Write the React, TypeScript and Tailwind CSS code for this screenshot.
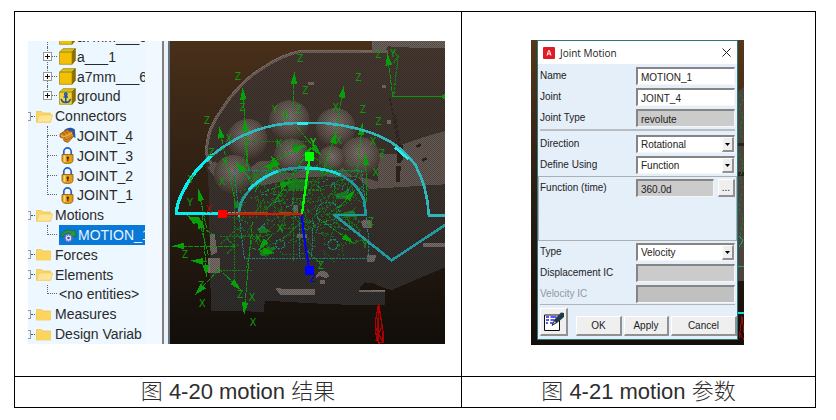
import type { ReactNode } from "react";

type Kind = "cube" | "ground" | "motor" | "lock" | "motion" | "none";

type TreeRow =
  | { type: "folder"; label: string; open?: boolean }
  | { type: "item"; label: string; icon: Kind; expandable?: boolean; last?: boolean; selected?: boolean };

const rows: TreeRow[] = [
  { type: "item", label: "a7mm___5", icon: "cube", expandable: true },
  { type: "item", label: "a___1", icon: "cube", expandable: true },
  { type: "item", label: "a7mm___6", icon: "cube", expandable: true },
  { type: "item", label: "ground", icon: "ground", expandable: true, last: true },
  { type: "folder", label: "Connectors", open: true },
  { type: "item", label: "JOINT_4", icon: "motor" },
  { type: "item", label: "JOINT_3", icon: "lock" },
  { type: "item", label: "JOINT_2", icon: "lock" },
  { type: "item", label: "JOINT_1", icon: "lock", last: true },
  { type: "folder", label: "Motions", open: true },
  { type: "item", label: "MOTION_1", icon: "motion", last: true, selected: true },
  { type: "folder", label: "Forces" },
  { type: "folder", label: "Elements", open: true },
  { type: "item", label: "<no entities>", icon: "none", last: true },
  { type: "folder", label: "Measures" },
  { type: "folder", label: "Design Variab" },
];

function FolderIcon({ open }: { open?: boolean }) {
  return (
    <svg viewBox="0 0 17 13" className="h-[13px] w-[17px] shrink-0">
      <path d="M0.5 12V1.5h5l1.5 1.5h7.5V12z" fill="#fbd667" stroke="#edc04a" strokeWidth="0.7" />
      {open ? (
        <path d="M0.8 12.3L3 5h13.7l-2 7.3z" fill="#fee594" stroke="#f0c95a" strokeWidth="0.7" />
      ) : (
        <path d="M1 4.5h13.5V12H1z" fill="#fdd45c" />
      )}
    </svg>
  );
}

function ItemIcon({ kind }: { kind: Kind }) {
  if (kind === "cube" || kind === "ground") {
    return (
      <svg viewBox="0 0 17 17" className="h-[17px] w-[17px] shrink-0">
        <path d="M0.5 4.2L4 0.7h12.3l-3.3 3.5z" fill="#dcc11a" stroke="#8d7400" strokeWidth="0.7" />
        <path d="M13 4.2L16.3 0.7v11.8L13 16.3z" fill="#8d7100" stroke="#735c00" strokeWidth="0.7" />
        <path d="M0.5 4.2H13v12.1H0.5z" fill={kind === "cube" ? "#f2c004" : "#f3cf3a"} stroke="#a68100" strokeWidth="0.7" />
        {kind === "ground" && (
          <g fill="none" stroke="#1753b0" strokeWidth="1.5">
            <circle cx="6.8" cy="6.3" r="1.2" />
            <path d="M6.8 7.5v7M4.6 9h4.4M2.2 10.8c.4 2.4 2.2 3.6 4.6 3.7 2.4-.1 4.2-1.3 4.6-3.7" />
          </g>
        )}
      </svg>
    );
  }
  if (kind === "lock") {
    return (
      <svg viewBox="0 0 13 17" className="mx-[2px] h-[17px] w-[13px] shrink-0">
        <path d="M2.8 8V4.6a3.7 3.7 0 0 1 7.4 0V8" fill="none" stroke="#2a5fc0" strokeWidth="1.7" />
        <path d="M1 7.5h11v6c0 1.8-1.8 3-5.5 3S1 15.3 1 13.5z" fill="#e59d18" stroke="#8a5a08" strokeWidth="0.8" />
        <path d="M2.5 8.3h2V15h-2z" fill="#ffd469" />
        <circle cx="6.8" cy="10.8" r="1.2" fill="#4a2c00" />
        <path d="M6.2 11h1.2v3.2H6.2z" fill="#4a2c00" />
      </svg>
    );
  }
  if (kind === "motor") {
    return (
      <svg viewBox="0 0 17 17" className="h-[17px] w-[17px] shrink-0">
        <path d="M5 3.500C8 0 13 .2 15.800 2.500L16.500 11l-4-2z" fill="#1d57b4" />
        <path d="M1 7l7-4.500 3 2 2-.5 1.500 5.500L9 15.500l-4-1.500-.5-2.500L1 10z" fill="#d68719" stroke="#8c520a" strokeWidth="0.8" />
        <path d="M2 8.500l3 1.500 8-4M4.500 11.500l2 1 7.500-4" fill="none" stroke="#f7bd58" />
        <path d="M5 10l1.500 3 7-3.800M3 6l3 1.500M6 4.500L9 6" fill="none" stroke="#8c520a" strokeWidth="0.8" />
      </svg>
    );
  }
  return (
    <svg viewBox="0 0 17 15" className="ml-px h-[15px] w-[17px] shrink-0">
      <path d="M.8 8.5C2.5 3 7.5.3 12.5 3.3L14.5 1.500 16.300 9 9.500 7.500l1.500-1.800C8 4 4.500 5 2.800 9z" fill="#2a9a36" stroke="#146b20" strokeWidth="0.6" />
      <circle cx="8.5" cy="10" r="3.4" fill="#e6e6fa" stroke="#7169c8" strokeWidth="1.6" strokeDasharray="2 .7" />
      <circle cx="8.5" cy="10" r="1.3" fill="#4947a5" />
    </svg>
  );
}

function Guide({ expandable, last }: { expandable?: boolean; last?: boolean }) {
  return (
    <span className="relative ml-[19px] flex w-3 shrink-0 flex-col self-stretch">
      <span className="flex flex-1 border-l border-dotted border-[#666]">
        <span className="mr-[2px] flex-1 border-b border-dotted border-[#666]" />
      </span>
      <span className={`flex-1 ${last ? "" : "border-l border-dotted border-[#666]"}`} />
      {expandable && (
        <span className="absolute top-[5px] -left-1 grid h-[9px] w-[9px] place-items-center border border-[#9a9a9a] bg-white">
          <svg viewBox="0 0 7 7" className="h-[7px] w-[7px]" shapeRendering="crispEdges">
            <path d="M1 3h5v1H1zM3 1h1v5H3z" fill="#111" />
          </svg>
        </span>
      )}
    </span>
  );
}

function Tree() {
  return (
    <div className="flex w-[142px] shrink-0 items-end overflow-hidden bg-[#f1f8ff]">
      <ul className="flex h-[317px] w-[117px] flex-col overflow-hidden bg-[#edf7ff] text-[14px] leading-5 text-[#2a2a2a]">
        {rows.map((row) =>
          row.type === "folder" ? (
            <li key={row.label} className="flex min-h-0 flex-1 items-center whitespace-nowrap">
              <span className="h-[9px] w-[3px] shrink-0 border border-l-0 border-[#999]" />
              <span className="w-1 shrink-0 border-t border-dotted border-[#555]" />
              <span className="ml-px flex"><FolderIcon open={row.open} /></span>
              <span className="ml-[2px]">{row.label}</span>
            </li>
          ) : (
            <li key={row.label} className="flex min-h-0 flex-1 items-center whitespace-nowrap">
              <Guide expandable={row.expandable} last={row.last} />
              {row.icon === "none" ? (
                <span>{row.label}</span>
              ) : (
                <span className={`flex flex-1 items-center self-stretch ${row.selected ? "bg-[#0a78d6] text-[#e8f4ff]" : ""}`}>
                  <ItemIcon kind={row.icon} />
                  <span className="ml-px">{row.label}</span>
                </span>
              )}
            </li>
          ),
        )}
      </ul>
      <div className="ml-auto h-full w-2 border-r-2 border-l-2 border-r-[#667078] border-l-[#808080] bg-[#eaf1f8]" />
    </div>
  );
}

const spheres = [
  [247, 312, 60],
  [373, 257, 61],
  [512, 278, 59],
  [585, 366, 60],
  [205, 418, 58],
  [380, 362, 52],
  [500, 372, 40],
];

const axes = [
  [385, 215, 388, 112],
  [250, 405, 233, 158],
  [215, 520, 162, 274],
  [510, 300, 537, 152],
  [575, 430, 592, 264],
  [245, 400, 240, 252],
  [210, 634, 22, 633],
  [125, 680, 78, 677],
  [160, 705, 90, 780],
  [125, 580, 100, 462],
  [262, 560, 237, 838],
  [112, 540, 125, 725],
  [150, 605, 65, 540],
  [160, 700, 228, 765],
  [683, 185, 667, 55],
  [460, 550, 566, 625],
  [395, 275, 468, 362],
  [280, 460, 212, 380],
  [350, 420, 318, 362],
  [270, 470, 330, 370],
  [605, 500, 602, 355],
  [470, 420, 515, 290],
  [330, 500, 440, 335],
  [290, 400, 420, 330],
  [110, 560, 70, 545],
  [130, 660, 100, 545],
  [320, 600, 280, 645],
  [300, 470, 380, 440],
  [520, 520, 570, 465],
  [260, 640, 330, 655],
];

const letters: [string, number, number][] = [
  ["Z", 218, 123], ["Z", 405, 70], ["Z", 125, 255], ["Z", 139, 352], ["Z", 580, 126], ["Z", 593, 222],
  ["Z", 640, 258], ["Z", 650, 354], ["Z", 640, 57], ["Y", 684, 54], ["X", 624, 318], ["X", 632, 412],
  ["Z", 420, 165], ["Y", 330, 222], ["X", 512, 218], ["Z", 59, 657], ["Y", 75, 503], ["Y", 78, 432],
  ["X", 112, 806], ["X", 264, 862], ["X", 261, 786], ["Z", 225, 777], ["Z", 108, 750], ["X", 172, 440],
  ["Z", 232, 218], ["X", 192, 310], ["K", 343, 325], ["Z", 400, 222], ["X", 521, 317], ["Z", 467, 690],
  ["X", 345, 580], ["Y", 600, 628], ["B", 362, 240], ["X", 180, 382], ["X", 280, 610], ["Z", 617, 560],
];

function clutter(count: number, seed: number, x0: number, y0: number, w: number, h: number, len: number) {
  let s = seed;
  const next = () => {
    s = (s * 16807) % 2147483647;
    return s / 2147483647;
  };
  const parts: string[] = [];
  for (let i = 0; i < count; i++) {
    const x = x0 + next() * w;
    const y = y0 + next() * h;
    const dx = (next() - 0.5) * len;
    const dy = (next() - 0.5) * len;
    parts.push(`M${x.toFixed(0)} ${y.toFixed(0)}l${dx.toFixed(0)} ${dy.toFixed(0)}`);
  }
  return parts.join("");
}

const mesh = clutter(95, 4711, 225, 405, 365, 180, 120);
const meshLow = clutter(26, 977, 235, 560, 340, 105, 100);
const flecks = clutter(190, 313, 215, 405, 395, 235, 26);
const cyanFlecks = clutter(36, 99, 250, 400, 310, 190, 40);

const bodyShape =
  "M138 828L130 420Q115 375 122 335Q130 275 165 225Q190 185 215 160Q250 125 290 98Q350 58 405 47L620 50 625 18H840V697L680 765 655 758 625 745 600 742 580 765 660 768V811L500 808 300 797 296 830z";

function Axis({ p }: { p: number[] }) {
  const [x1, y1, x2, y2] = p;
  const d = Math.hypot(x2 - x1, y2 - y1);
  const ux = (x2 - x1) / d;
  const uy = (y2 - y1) / d;
  const bx = x2 - ux * 36;
  const by = y2 - uy * 36;
  return (
    <g>
      <path d={`M${x1} ${y1}L${x2} ${y2}`} stroke="#0c960c" strokeWidth="3" strokeDasharray="15 3" />
      <path d={`M${x2} ${y2}L${bx - uy * 10} ${by + ux * 10}L${bx + uy * 10} ${by - ux * 10}Z`} fill="#08a008" />
    </g>
  );
}

function Viewport() {
  return (
    <svg viewBox="15 18 825 909" preserveAspectRatio="xMidYMid slice" className="h-full min-w-0 flex-1" shapeRendering="crispEdges" role="img">
      <defs>
        <linearGradient id="sky" x1="0" y1="0" x2="0" y2="1">
          <stop offset="0" stopColor="#49301a" />
          <stop offset="0.5" stopColor="#2c1e13" />
          <stop offset="1" stopColor="#110d09" />
        </linearGradient>
        <linearGradient id="shell" x1="0" y1="0" x2="0" y2="1">
          <stop offset="0" stopColor="#493a32" />
          <stop offset="0.55" stopColor="#3b332e" />
          <stop offset="1" stopColor="#2f2e2d" />
        </linearGradient>
        <radialGradient id="ball" cx="0.5" cy="0.4" r="0.6">
          <stop offset="0" stopColor="#857a75" />
          <stop offset="0.55" stopColor="#665b54" />
          <stop offset="1" stopColor="#43362f" />
        </radialGradient>
        <pattern id="dither" width="6" height="6" patternUnits="userSpaceOnUse">
          <path d="M0 0h3v3H0zM3 3h3v3H3z" fill="#17110d" fillOpacity="0.32" />
        </pattern>
      </defs>
      <path d="M0 0H860V940H0z" fill="url(#sky)" />
      <path d={bodyShape} fill="url(#shell)" />
      <path d="M620 18H840V40L740 38 668 34 660 50 620 52z" fill="#71665f" />
      <path d="M148 398Q118 365 126 330Q132 275 168 228Q190 190 218 163Q250 125 292 100Q350 60 408 49H670" fill="none" stroke="#74675f" strokeWidth="9" />
      <path d="M840 288L780 305 712 328 702 357 640 355 638 440 600 428 470 424 380 432 300 450 200 452 148 425 128 398 148 380 220 425 280 380 330 375 380 400 470 400 520 370 560 405 612 462 840 448z" fill="#665b55" />
      {spheres.map(([x, y, r]) => (
        <circle key={`${x}-${y}`} cx={x} cy={y} r={r} fill="url(#ball)" />
      ))}
      <path d="M675 190L704 355M690 240L710 360" stroke="#302722" strokeWidth="5" strokeDasharray="10 4" />
      <path d="M696 330h17v45l-8 10h-9zM694 393h14l-4 47h-10zM752 333l12-9 6 6-12 9zM770 374l12-9 6 6-12 9z" fill="#30241b" />
      <path d="M430 140h16v10h-16zM650 150h14v10h-14zM665 256h12v12h-12zM135 598h14l8 55-20 8zM130 668h35v46h-35zM775 625h65v10h-65zM330 758l35 5h84v17H345zM583 765h77v6h-77zM588 560q16-14 34 0v18h-28zM452 724q20-35 42 0l-14 6q-14-12-28 0zM465 736h15v12h-15zM605 660h30l-8 22h-20zM385 510h14v25h-14zM395 598h30v10h-30z" fill="#7b716c" />
      <path d={bodyShape} fill="url(#dither)" />

      <g fill="none" stroke="#117d14">
        <path d={mesh} strokeWidth="3" strokeDasharray="8 4" opacity="0.8" />
        <path d={meshLow} strokeWidth="3" strokeDasharray="6 5" opacity="0.75" />
        <path d={flecks} strokeWidth="4" strokeDasharray="6 3" opacity="0.8" />
        <path d="M250 320H430M250 320L220 425M165 605H290L330 595M165 705H260M210 400V760M245 700L265 590M430 410H600M385 410V680M225 445L390 330 600 470" strokeWidth="3" strokeDasharray="6 3" />
        <path d="M355 610l50-45M185 610l26 25-26 20M285 650l25-14 20 4-28 24zM350 440h110v25H350zM420 640l50 50M700 60L686 182" strokeWidth="4" strokeDasharray="9 3" />
      </g>
      <path d="M284 650l14-12 30 1-10 16-30 10zM360 442l30-12 45 8-10 24-50 2zM275 582l20-8 25 17-35 4zM535 533l30-8 10 20-30 3zM208 500h22v18h-22zM510 477l38-10-3 25h-30zM380 325l48 10-44 12z" fill="#168619" opacity="0.8" />

      <g fill="none" stroke="#1d7f83" strokeWidth="3" strokeDasharray="7 3">
        <path d={cyanFlecks} />
        <path d="M208 406H590M208 406L222 540 238 670H612L608 560M403 560V670M445 560L440 670M590 406L608 570" />
        <circle cx="345" cy="627" r="14" />
        <circle cx="504" cy="628" r="15" />
        <circle cx="489" cy="535" r="34" />
      </g>
      {axes.map((p) => (
        <Axis key={p.join("-")} p={p} />
      ))}
      <path d="M683 185H832" stroke="#0b980b" strokeWidth="4" />
      <circle cx="838" cy="185" r="7" fill="#0b980b" />
      <path d="M700 65l-14 18M682 42l15 22" stroke="#167516" strokeWidth="4" />

      <g fill="none" strokeLinejoin="round">
        <path d="M165 535H34C35 500 60 450 92 410Q115 382 140 362" stroke="#08eeee" strokeWidth="10" />
        <path d="M140 362Q200 312 270 287T410 264H480Q580 275 645 304T750 388Q786 450 792 542H840" stroke="#2fb7bc" strokeWidth="8" />
        <path d="M395 266H430M690 337L730 372" stroke="#29ecee" strokeWidth="8" />
        <path d="M222 530Q225 490 265 455T350 405Q385 397 435 398T535 424Q580 450 597 495L603 540H508L680 676 840 570" stroke="#22999e" strokeWidth="8" />
        <path d="M250 465Q290 425 340 408M420 400Q480 398 525 419" stroke="#17dce0" strokeWidth="8" />
        <path d="M165 535H222V550" stroke="#16c5c9" strokeWidth="6" strokeDasharray="8 4" />
      </g>
      <path d="M174 536H410" stroke="#ed1000" strokeWidth="6" />
      <path d="M218 533H310M345 533H380" stroke="#756012" strokeWidth="3" />
      <path d="M160 524h26v26h-26z" fill="#f00" />
      <path d="M411 537L420 470 434 364" fill="none" stroke="#0f0" strokeWidth="7" />
      <path d="M421 351h26v26h-26z" fill="#0f0" />
      <path d="M410 540L420 625 433 706" fill="none" stroke="#00f" strokeWidth="6" />
      <path d="M421 692h27v27h-27z" fill="#00f" />
      <path d="M641 806L631 860V890L641 925 654 921V890L641 806V927M630 875l24 46M652 870l-20 48M637 850v70" fill="none" stroke="#ad0000" strokeWidth="4" />

      <g className="font-['DejaVu_Sans_Mono']" fontSize="32" textAnchor="middle" dominantBaseline="central" fill="#0c980c">
        {letters.map(([c, x, y]) => (
          <text key={`${x}-${y}`} x={x} y={y}>{c}</text>
        ))}
        <text x="131" y="524" fill="#a60d08">X</text>
        <text x="445" y="321" fill="#0cdd0c">Y</text>
        <text x="441" y="729" fill="#0000ee">Z</text>
      </g>
    </svg>
  );
}

const sunken = "h-[18px] w-full min-w-0 rounded-none border border-t-2 border-l-2 border-[#f6f6f6] border-t-[#858585] border-l-[#858585] pt-px pl-[3px] text-[10px] leading-3 outline-none";
const raised = "border border-r-2 border-b-2 border-white border-r-[#919191] border-b-[#919191] bg-[#efefef]";

function Field({ id, label, children, muted }: { id: string; label: string; children: ReactNode; muted?: boolean }) {
  return (
    <div className="grid grid-cols-[96px_1fr] items-center">
      <label htmlFor={id} className={muted ? "text-[#92999f]" : ""}>{label}</label>
      {children}
    </div>
  );
}

function Choice({ id, options }: { id: string; options: string[] }) {
  return (
    <div className="relative">
      <select id={id} className={`${sunken} block appearance-none bg-white`}>
        {options.map((o) => (
          <option key={o}>{o}</option>
        ))}
      </select>
      <span className={`pointer-events-none absolute top-[2px] right-px grid h-[15px] w-3 place-items-center ${raised}`}>
        <svg viewBox="0 0 5 3" className="h-[3px] w-[5px]">
          <path d="M0 0h5L2.5 3z" fill="#000" />
        </svg>
      </span>
    </div>
  );
}

function Dialog() {
  return (
    <form onSubmit={(e) => e.preventDefault()} className="flex h-full min-w-0 flex-1 flex-col border border-[#2b777e] bg-[#e5eff9] text-[10px] leading-3 text-[#222]">
      <div className="flex h-[23px] shrink-0 items-center bg-white pr-[6px] pl-[5px]">
        <svg viewBox="0 0 12 12" className="h-3 w-3">
          <rect width="12" height="12" rx="1" fill="#df1b23" />
          <path d="M4 8.5L5.6 3.5h.8L8 8.5M4.7 6.9h2.6" fill="none" stroke="#fff" strokeWidth="1" />
        </svg>
        <h2 className="ml-[5px] flex-1 font-['Open_Sans'] text-[10px]">Joint Motion</h2>
        <button type="button" aria-label="Close">
          <svg viewBox="0 0 9 9" className="h-[9px] w-[9px]">
            <path d="M.5.5l8 8M8.5.5l-8 8" stroke="#222" strokeWidth="1" />
          </svg>
        </button>
      </div>
      <div className="flex flex-col gap-[3px] px-[2px] pt-[3px] pb-[2px]">
        <Field id="name" label="Name"><input id="name" defaultValue="MOTION_1" className={`${sunken} bg-white`} /></Field>
        <Field id="joint" label="Joint"><input id="joint" defaultValue="JOINT_4" className={`${sunken} bg-white`} /></Field>
        <Field id="jtype" label="Joint Type"><input id="jtype" readOnly defaultValue="revolute" className={`${sunken} bg-[#cbcbcb]`} /></Field>
      </div>
      <hr className="mx-[2px] border-t-2 border-[#b9bdc1]" />
      <div className="flex flex-col gap-[3px] px-[2px] pt-1 pb-[2px]">
        <Field id="direction" label="Direction"><Choice id="direction" options={["Rotational", "Translational"]} /></Field>
        <Field id="using" label="Define Using"><Choice id="using" options={["Function", "Subroutine"]} /></Field>
      </div>
      <div className="min-h-0 flex-1 border border-[#aaafb3] px-px pt-[2px]">
        <Field id="func" label="Function (time)">
          <div className="flex gap-1">
            <input id="func" defaultValue="360.0d" className={`${sunken} bg-[#cbcbcb]`} />
            <button type="button" aria-label="Edit function" className={`h-[18px] w-[17px] shrink-0 ${raised}`}>...</button>
          </div>
        </Field>
      </div>
      <div className="flex flex-col gap-[3px] px-[2px] pt-[2px] pb-px">
        <Field id="type" label="Type"><Choice id="type" options={["Velocity", "Displacement", "Acceleration"]} /></Field>
        <Field id="dic" label="Displacement IC"><input id="dic" className={`${sunken} bg-[#cbcbcb]`} /></Field>
        <Field id="vic" label="Velocity IC" muted><input id="vic" disabled className={`${sunken} border-t-[#222] border-l-[#222] bg-[#c0c0c0]`} /></Field>
      </div>
      <hr className="mx-[2px] border-[#b0b4b8]" />
      <div className="flex items-end gap-[2px] py-[3px] pl-[2px]">
        <button type="button" aria-label="Comments" className={`mr-[6px] grid h-7 w-7 place-items-center ${raised}`}>
          <svg viewBox="0 0 24 24" className="h-6 w-6">
            <path d="M3.5 5h15v15.5h-15z" fill="#fff" stroke="#111" />
            <path d="M5 7h3M9.5 7h6M5 10h3M9.5 10h4M5 13h2M9 13h4" stroke="#2525ef" strokeWidth="1.5" />
            <path d="M11 15.5l2.5-6L20 2.5l3 .5v4l-7 6z" fill="#20384c" />
            <path d="M11 15.5l2.500-5 2 2z" fill="#c4ccd4" stroke="#111" strokeWidth="0.7" />
          </svg>
        </button>
        <button type="submit" className={`h-5 w-[46px] ${raised}`}>OK</button>
        <button type="button" className={`h-5 w-[45px] ${raised}`}>Apply</button>
        <button type="button" className={`h-5 flex-1 ${raised}`}>Cancel</button>
      </div>
    </form>
  );
}

function EdgeStrip() {
  return (
    <svg viewBox="0 0 6 305" className="h-full w-[6px] shrink-0" shapeRendering="crispEdges">
      <path d="M0 52l6-4V245H0z" fill="#4b433e" />
      <path d="M0 105h6v3H0zM0 134h6v4H0z" fill="#28201b" />
      <path d="M2 55l3 6-4 8 4 9-3 14 3 10M1 115l4 12-3 14 3 9M4 156l-3 15 4 12-3 15 3 12" fill="none" stroke="#14801a" strokeDasharray="3 2" />
      <path d="M1 199l4 5-4 6M0 230h6" fill="none" stroke="#239da0" />
      <path d="M0 277h6v2H0z" fill="#08dfe5" />
      <path d="M1 303l3-22 2 17M2 298l4 7" fill="none" stroke="#9f0808" />
    </svg>
  );
}

function Caption({ number, term }: { number: string; term: string }) {
  return (
    <td className="border border-black text-center text-[22px] leading-[30px] text-[#2e2e2e]">
      <span className="font-light">图</span> {number} motion <span className="font-light">{term}</span>
    </td>
  );
}

export default function App() {
  return (
    <main className="bg-white pt-[11px] pr-5 pl-[14px] font-['Liberation_Sans','Noto_Sans_CJK_SC',sans-serif]">
      <table className="w-full table-fixed border-collapse">
        <colgroup>
          <col className="w-[55.8%]" />
          <col />
        </colgroup>
        <tbody>
          <tr>
            <td className="border border-black pt-[29px] pr-4 pb-8 pl-[13px] align-top">
              <div className="flex h-[303px] overflow-hidden">
                <Tree />
                <Viewport />
              </div>
            </td>
            <td className="border border-black pt-7 pr-[2px] pb-[31px] align-top">
              <div className="mx-auto flex h-[305px] w-[213px] bg-linear-to-b from-[#553719] via-[#2c1e13] to-[#150e09] pb-[5px] pl-[6px]">
                <Dialog />
                <EdgeStrip />
              </div>
            </td>
          </tr>
          <tr>
            <Caption number="4-20" term="结果" />
            <Caption number="4-21" term="参数" />
          </tr>
        </tbody>
      </table>
    </main>
  );
}
